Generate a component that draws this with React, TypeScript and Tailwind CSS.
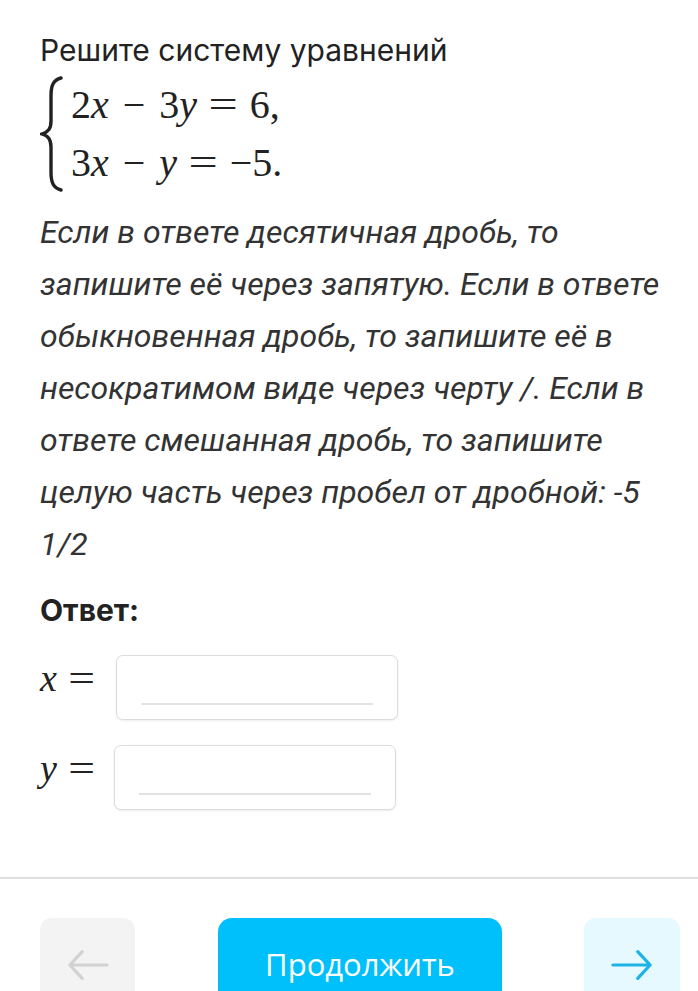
const serif = { fontFamily: '"Liberation Serif", "DejaVu Serif", serif' };

const Brace = () => (
  <svg width="24" height="116" viewBox="0 0 24 116" className="shrink-0">
    <path
      d="M21 2 C13 4 11 10 11 20 L11 45 C11 53 8 56 2 58 C8 60 11 63 11 71 L11 96 C11 106 13 112 21 114"
      fill="none"
      stroke="#222"
      strokeWidth="3.4"
      strokeLinecap="round"
    />
  </svg>
);

const Minus = () => <span className="inline-block mx-[14px]">−</span>;
const Eq = () => <span className="inline-block mx-[15px] scale-x-[1.3]">=</span>;

const Arrow = ({ dir, color }: { dir: "left" | "right"; color: string }) => (
  <svg width="42" height="34" viewBox="0 0 44 34" fill="none" stroke={color} strokeWidth="3.4" strokeLinecap="round" strokeLinejoin="round">
    {dir === "left" ? (
      <path d="M42 17 H3 M16 3 L3 17 L16 31" />
    ) : (
      <path d="M2 17 H41 M28 3 L41 17 L28 31" />
    )}
  </svg>
);

const AnswerRow = ({ v, shift }: { v: string; shift?: boolean }) => (
  <div className={`flex items-center ${shift ? "gap-[12px]" : "gap-[14px]"}`}>
    <div className="w-[62px] text-[38px] leading-none text-[#222] flex items-center gap-[14px] pb-[20px]" style={serif}>
      <span className="italic">{v}</span>
      <span className="inline-block scale-x-[1.25]">=</span>
    </div>
    <div className="w-[282px] h-[65px] rounded-[7px] border border-[#dcdcdc] bg-white shadow-[0_1px_2px_rgba(0,0,0,0.08)] flex items-end px-[24px] pb-[14px]">
      <div className="h-[2px] w-full bg-[#e2e2e2]" />
    </div>
  </div>
);

export default function App() {
  return (
    <div className="w-[698px] h-[991px] overflow-hidden bg-white flex flex-col">
      <div className="px-[40px] pt-[30px] shrink-0">
        <h1 className="text-[30px] leading-[40px] text-[#222]" style={{ fontFamily: 'Inter, "Noto Sans", sans-serif' }}>
          Решите систему уравнений
        </h1>
        <div className="flex items-center gap-[7px] mt-[6px]">
          <Brace />
          <div className="text-[40px] leading-[58px] text-[#222]" style={serif}>
            <div>
              2<i>x</i>
              <Minus />3<i>y</i>
              <Eq />6,
            </div>
            <div>
              3<i>x</i>
              <Minus />
              <i>y</i>
              <Eq />
              −5.
            </div>
          </div>
        </div>
        <p
          className="mt-[14px] italic text-[32px] leading-[52px] text-[#333] w-[630px]"
          style={{ fontFamily: 'Roboto, "Noto Sans", sans-serif' }}
        >
          Если в ответе десятичная дробь, то запишите её через запятую. Если в ответе обыкновенная дробь, то запишите её в
          несократимом виде через черту /. Если в ответе смешанная дробь, то запишите целую часть через пробел от дробной: -5
          1/2
        </p>
        <div
          className="mt-[21px] text-[30px] leading-[38px] font-bold text-[#222]"
          style={{ fontFamily: 'Inter, "Noto Sans", sans-serif' }}
        >
          Ответ:
        </div>
        <div className="mt-[26px] flex flex-col gap-[25px]">
          <AnswerRow v="x" />
          <AnswerRow v="y" shift />
        </div>
      </div>
      <div className="mt-[67px] h-[2px] shrink-0 bg-[#dedede]" />
      <div className="mt-[39px] flex shrink-0 pl-[40px] gap-[83px]">
        <div className="w-[95px] h-[96px] rounded-[12px] bg-[#f3f3f3] flex items-center justify-center pb-[2px]">
          <Arrow dir="left" color="#d2d2d2" />
        </div>
        <div
          className="w-[284px] h-[96px] rounded-[14px] bg-[#00c0fb] flex items-center justify-center pb-[4px] text-white text-[31px]"
          style={{ fontFamily: '"Open Sans", "Noto Sans", sans-serif' }}
        >
          Продолжить
        </div>
        <div className="w-[96px] h-[96px] -ml-[1px] rounded-[12px] bg-[#e6f9fe] flex items-center justify-center pb-[2px]">
          <Arrow dir="right" color="#1db3e6" />
        </div>
      </div>
    </div>
  );
}
